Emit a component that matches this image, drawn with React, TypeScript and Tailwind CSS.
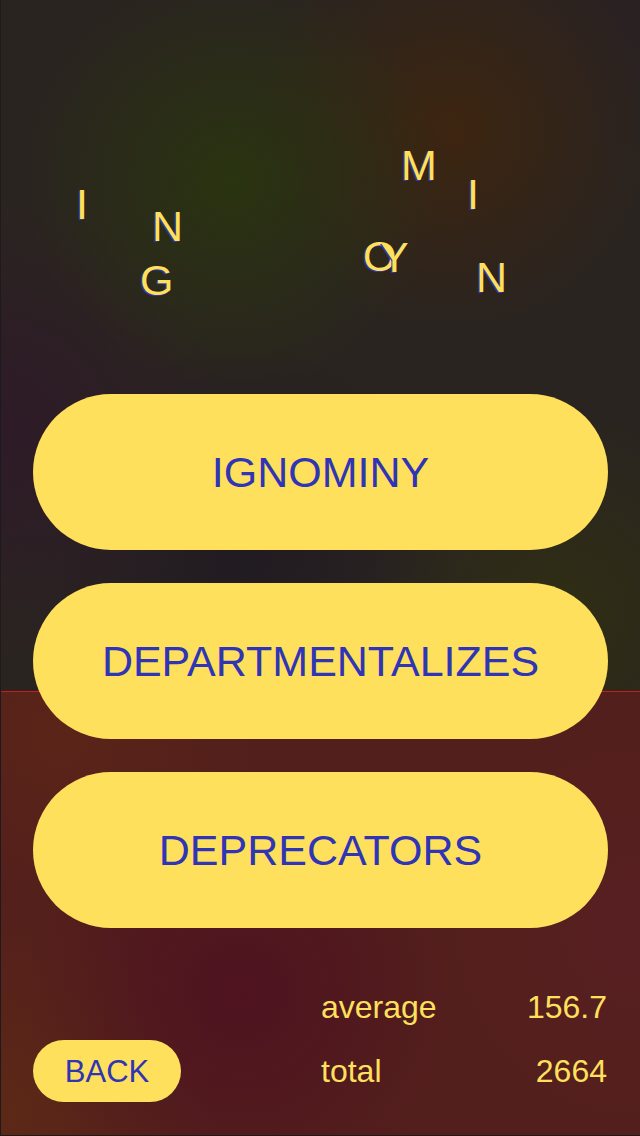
import React from "react";

type Tile = { ch: string; x: number; y: number };

// scattered letters, element top-left in px
const tiles: Tile[] = [
  { ch: "I", x: 76, y: 183 },
  { ch: "N", x: 152, y: 205 },
  { ch: "G", x: 140, y: 259 },
  { ch: "M", x: 401, y: 144 },
  { ch: "I", x: 467, y: 173 },
  { ch: "O", x: 363, y: 235 },
  { ch: "Y", x: 380, y: 236 },
  { ch: "N", x: 476, y: 256 },
];

const choices = ["IGNOMINY", "DEPARTMENTALIZES", "DEPRECATORS"];

export default function App() {
  return (
    <div className="relative h-[1136px] w-[640px] overflow-hidden font-['Liberation_Sans',Arial,sans-serif]">
      {/* backdrop */}
      <div className="absolute inset-0 flex flex-col border-l border-b border-[#1c1a1c]">
        <div className="h-[691px] bg-[#2a2420] bg-[radial-gradient(circle_at_230px_180px,#2a3410_0px,transparent_210px),radial-gradient(circle_at_450px_130px,#3d2510_0px,transparent_200px),radial-gradient(circle_at_0px_430px,#2e1a28_0px,transparent_230px),radial-gradient(circle_at_560px_610px,#2f2e14_0px,transparent_200px),radial-gradient(circle_at_240px_560px,#211b22_0px,transparent_220px),radial-gradient(circle_at_620px_20px,#2a2222_0px,transparent_160px)]" />
        <div className="h-px bg-[#c81e1a]" />
        <div className="flex-1 bg-[#531f1c] bg-[radial-gradient(circle_at_300px_760px,#4d1221_0px,transparent_260px),radial-gradient(circle_at_240px_300px,#4e1320_0px,transparent_220px),radial-gradient(circle_at_0px_420px,#5c2816_0px,transparent_220px),radial-gradient(circle_at_640px_240px,#581f22_0px,transparent_200px),radial-gradient(circle_at_60px_40px,#5a2418_0px,transparent_200px)]" />
      </div>

      <div className="relative flex flex-col">
        <div className="relative h-[394px]">
          {tiles.map((t, i) => (
            <span
              key={i}
              className="absolute text-[43px] leading-none text-[#ffe05c] [text-shadow:-1px_1px_0_#2f35b5]"
              style={{ left: t.x, top: t.y }}
            >
              {t.ch}
            </span>
          ))}
        </div>

        <div className="flex flex-col gap-[33px] pl-[33px] pr-[32px]">
          {choices.map((w) => (
            <button
              key={w}
              className="flex h-[156px] items-center justify-center rounded-full bg-[#ffe05c] text-[43px] leading-none text-[#2f35b5]"
            >
              {w}
            </button>
          ))}
        </div>

        <div className="mt-[47px] flex items-end pl-[33px] pr-[33px]">
          <button className="mb-px flex h-[62px] w-[148px] items-center justify-center rounded-full bg-[#ffe05c] text-[31px] leading-none text-[#2f35b5]">
            BACK
          </button>
          <div className="ml-[140px] flex flex-1 flex-col text-[32px] leading-none text-[#ffe05c]">
            <div className="flex h-[64px] items-center justify-between">
              <span>average</span>
              <span>156.7</span>
            </div>
            <div className="flex h-[64px] items-center justify-between">
              <span>total</span>
              <span>2664</span>
            </div>
          </div>
        </div>
      </div>
    </div>
  );
}
